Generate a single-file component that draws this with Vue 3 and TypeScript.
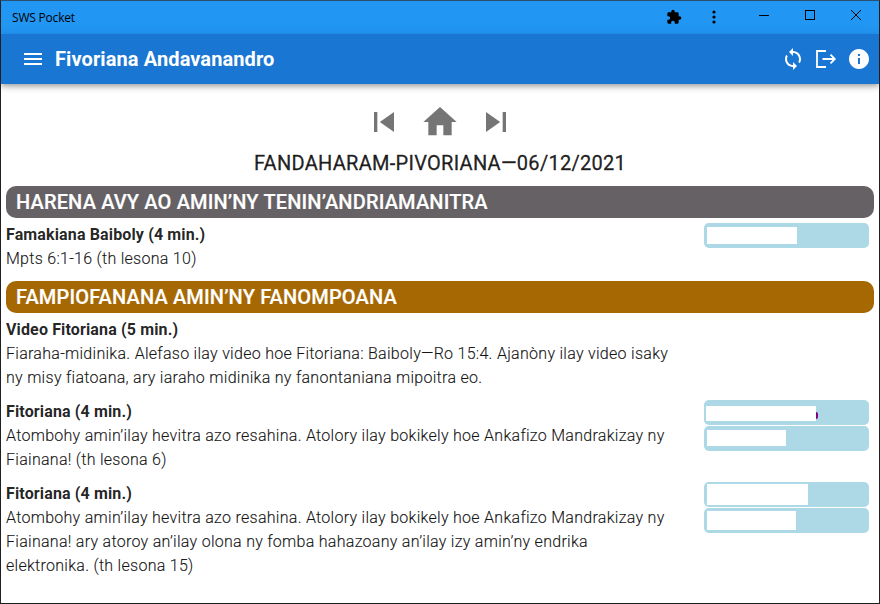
<script setup lang="ts">
interface Bar { left: number; top: number; width: number; height: number; mark?: boolean }
interface Item { title: string; lines: string[]; bars: Bar[] }
interface Section { name: string; tone: string; items: Item[] }

const sections: Section[] = [
  {
    name: 'HARENA AVY AO AMIN’NY TENIN’ANDRIAMANITRA',
    tone: 'grey',
    items: [
      {
        title: 'Famakiana Baiboly (4 min.)',
        lines: ['Mpts 6:1-16 (th lesona 10)'],
        bars: [{ left: 3, top: 4, width: 90, height: 17 }],
      },
    ],
  },
  {
    name: 'FAMPIOFANANA AMIN’NY FANOMPOANA',
    tone: 'amber',
    items: [
      {
        title: 'Video Fitoriana (5 min.)',
        lines: [
          'Fiaraha-midinika. Alefaso ilay video hoe Fitoriana: Baiboly—Ro 15:4. Ajanòny ilay video isaky',
          'ny misy fiatoana, ary iaraho midinika ny fanontaniana mipoitra eo.',
        ],
        bars: [],
      },
      {
        title: 'Fitoriana (4 min.)',
        lines: [
          'Atombohy amin’ilay hevitra azo resahina. Atolory ilay bokikely hoe Ankafizo Mandrakizay ny',
          'Fiainana! (th lesona 6)',
        ],
        bars: [
          { left: 2, top: 6, width: 110, height: 15, mark: true },
          { left: 3, top: 4, width: 79, height: 16 },
        ],
      },
      {
        title: 'Fitoriana (4 min.)',
        lines: [
          'Atombohy amin’ilay hevitra azo resahina. Atolory ilay bokikely hoe Ankafizo Mandrakizay ny',
          'Fiainana! ary atoroy an’ilay olona ny fomba hahazoany an’ilay izy amin’ny endrika',
          'elektronika. (th lesona 15)',
        ],
        bars: [
          { left: 3, top: 2, width: 101, height: 21 },
          { left: 3, top: 3, width: 89, height: 19 },
        ],
      },
    ],
  },
]

function barStyle(b: Bar) {
  return {
    marginLeft: `${b.left}px`,
    marginTop: `${b.top}px`,
    width: `${b.width}px`,
    height: `${b.height}px`,
  }
}
</script>

<template>
  <div class="window">
    <header class="titlebar">
      <span class="app-name">SWS Pocket</span>
      <svg class="ext" viewBox="0 0 24 24"><path d="M20.500 11H19V7c0-1.100-.9-2-2-2h-4V3.500a2.500 2.500 0 0 0-5 0V5H4c-1.100 0-2 .9-2 2v3.800h1.500c1.500 0 2.700 1.200 2.700 2.700S5 16.200 3.500 16.200H2V20c0 1.100.9 2 2 2h3.800v-1.500c0-1.500 1.200-2.700 2.700-2.700s2.700 1.200 2.700 2.700V22H17c1.100 0 2-.9 2-2v-4h1.500a2.500 2.500 0 0 0 0-5z" /></svg>
      <svg class="dots" viewBox="0 0 4 14"><circle cx="2" cy="2" r="1.600" /><circle cx="2" cy="7" r="1.600" /><circle cx="2" cy="12" r="1.600" /></svg>
      <div class="controls">
        <svg viewBox="0 0 46 30" shape-rendering="crispEdges"><path d="M18 14.500h10" /></svg>
        <svg viewBox="0 0 46 30" shape-rendering="crispEdges"><path d="M18.500 9.500h9v9h-9z" /></svg>
        <svg viewBox="0 0 46 30"><path d="M18 9l10 10M28 9L18 19" /></svg>
      </div>
    </header>

    <div class="appbar">
      <svg class="menu" viewBox="0 0 24 24"><path d="M3 6h18v2H3zM3 11h18v2H3zM3 16h18v2H3z" /></svg>
      <h1>Fivoriana Andavanandro</h1>
      <svg class="tool" viewBox="0 0 24 24"><path d="M12 4V1L8 5l4 4V6c3.310 0 6 2.690 6 6 0 1.010-.25 1.970-.7 2.800l1.460 1.460C19.540 15.030 20 13.570 20 12c0-4.420-3.580-8-8-8zm0 14c-3.310 0-6-2.690-6-6 0-1.010.25-1.970.7-2.800L5.240 7.740C4.460 8.970 4 10.430 4 12c0 4.420 3.580 8 8 8v3l4-4-4-4z" /></svg>
      <svg class="tool stroke" viewBox="0 0 24 24"><path d="M12 4H3v16h9M8.500 12H21M16.500 7.700L20.800 12l-4.300 4.300" /></svg>
      <svg class="tool" viewBox="0 0 24 24"><path d="M12 2C6.480 2 2 6.480 2 12s4.480 10 10 10 10-4.480 10-10S17.520 2 12 2zm1 15h-2v-6h2zm0-8h-2V7h2z" /></svg>
    </div>

    <main>
      <nav>
        <svg viewBox="0 0 24 24"><path d="M6 6h2v12H6zm3.500 6l8.500 6V6z" /></svg>
        <svg viewBox="0 0 24 24"><path d="M10 20v-6h4v6h5v-8h3L12 3 2 12h3v8z" /></svg>
        <svg viewBox="0 0 24 24"><path d="M6 18l8.500-6L6 6zM16 6v12h2V6z" /></svg>
      </nav>
      <h2>FANDAHARAM-PIVORIANA—06/12/2021</h2>

      <section v-for="s in sections" :key="s.name">
        <h3 :class="s.tone">{{ s.name }}</h3>
        <article v-for="(item, i) in s.items" :key="i">
          <div class="text">
            <h4>{{ item.title }}</h4>
            <p v-for="line in item.lines" :key="line">{{ line }}</p>
          </div>
          <div class="chips">
            <div v-for="(b, j) in item.bars" :key="j" class="chip">
              <div class="bar" :style="barStyle(b)"></div>
              <i v-if="b.mark" class="mark"></i>
            </div>
          </div>
        </article>
      </section>
    </main>
  </div>
</template>

<style>
body { margin: 0; overflow: hidden; }
</style>

<style scoped>
* { box-sizing: border-box; }
h1, h2, h3, h4, p { margin: 0; }
.window {
  width: 880px;
  height: 604px;
  border: 1px solid #202020;
  border-top-color: #2b5172;
  background: #fff;
  color: rgba(0, 0, 0, 0.87);
  font-family: Roboto, sans-serif;
  overflow: hidden;
}
.titlebar {
  display: flex;
  height: 33px;
  background: #2196f3;
  color: #000;
}
.app-name {
  flex: 1;
  padding-left: 11px;
  font: 12px/34px "Open Sans", sans-serif;
  letter-spacing: -0.2px;
}
.ext { width: 16px; height: 16px; margin: 8px 30px 0 0; }
.dots { width: 4px; height: 14px; margin: 9px 26px 0 0; }
.controls { display: flex; }
.controls svg { width: 46px; height: 30px; fill: none; stroke: #000; }
.controls svg:first-child { margin-left: -1px; }
.appbar {
  display: flex;
  align-items: center;
  height: 50px;
  padding: 0 8px 0 20px;
  background: #1976d2;
  color: #fff;
  box-shadow: 0 2px 4px -1px rgba(0, 0, 0, 0.2), 0 4px 5px rgba(0, 0, 0, 0.14), 0 1px 10px rgba(0, 0, 0, 0.12);
}
.appbar svg { width: 24px; height: 24px; fill: #fff; }
.appbar h1 {
  flex: 1;
  padding-left: 10px;
  font-size: 20px;
  font-weight: 700;
  line-height: 32px;
  letter-spacing: 0.1px;
}
.appbar .tool { margin-left: 9px; }
.appbar .stroke { fill: none; stroke: #fff; stroke-width: 1.8; }
main { padding: 18px 5px 0; }
nav { display: flex; justify-content: center; gap: 16px; height: 40px; }
nav svg { width: 40px; height: 40px; fill: #757575; }
h2 {
  height: 44px;
  font-size: 20px;
  font-weight: 400;
  -webkit-text-stroke: 0.3px currentColor;
  line-height: 43px;
  letter-spacing: 0.28px;
  text-align: center;
}
h3 {
  height: 32px;
  margin-bottom: 4px;
  padding-left: 10px;
  border-radius: 10px;
  color: #fff;
  font-size: 20px;
  font-weight: 500;
  -webkit-text-stroke: 0.2px currentColor;
  line-height: 32px;
  letter-spacing: 0.15px;
}
.grey { background: #656164; }
.amber { background: #a56803; }
section + section { margin-top: 11px; }
article { display: flex; }
article + article { margin-top: 10px; }
.text { flex: 1; padding-top: 1px; margin-bottom: -1px; }
h4, p {
  font-size: 16px;
  line-height: 24px;
  white-space: nowrap;
}
h4 { font-weight: 700; letter-spacing: 0.14px; }
p { font-weight: 300; letter-spacing: 0.28px; -webkit-text-stroke: 0.2px currentColor; }
.chips {
  display: flex;
  flex-direction: column;
  gap: 1px;
  width: 165px;
  margin-right: 5px;
  padding-top: 1px;
}
.chip {
  display: flex;
  height: 25px;
  border-radius: 5px;
  background: #add8e6;
}
.bar { background: #fff; }
.mark {
  width: 1.5px;
  height: 7px;
  margin-top: 12px;
  border-radius: 0 2px 2px 0;
  background: #800080;
}
</style>
